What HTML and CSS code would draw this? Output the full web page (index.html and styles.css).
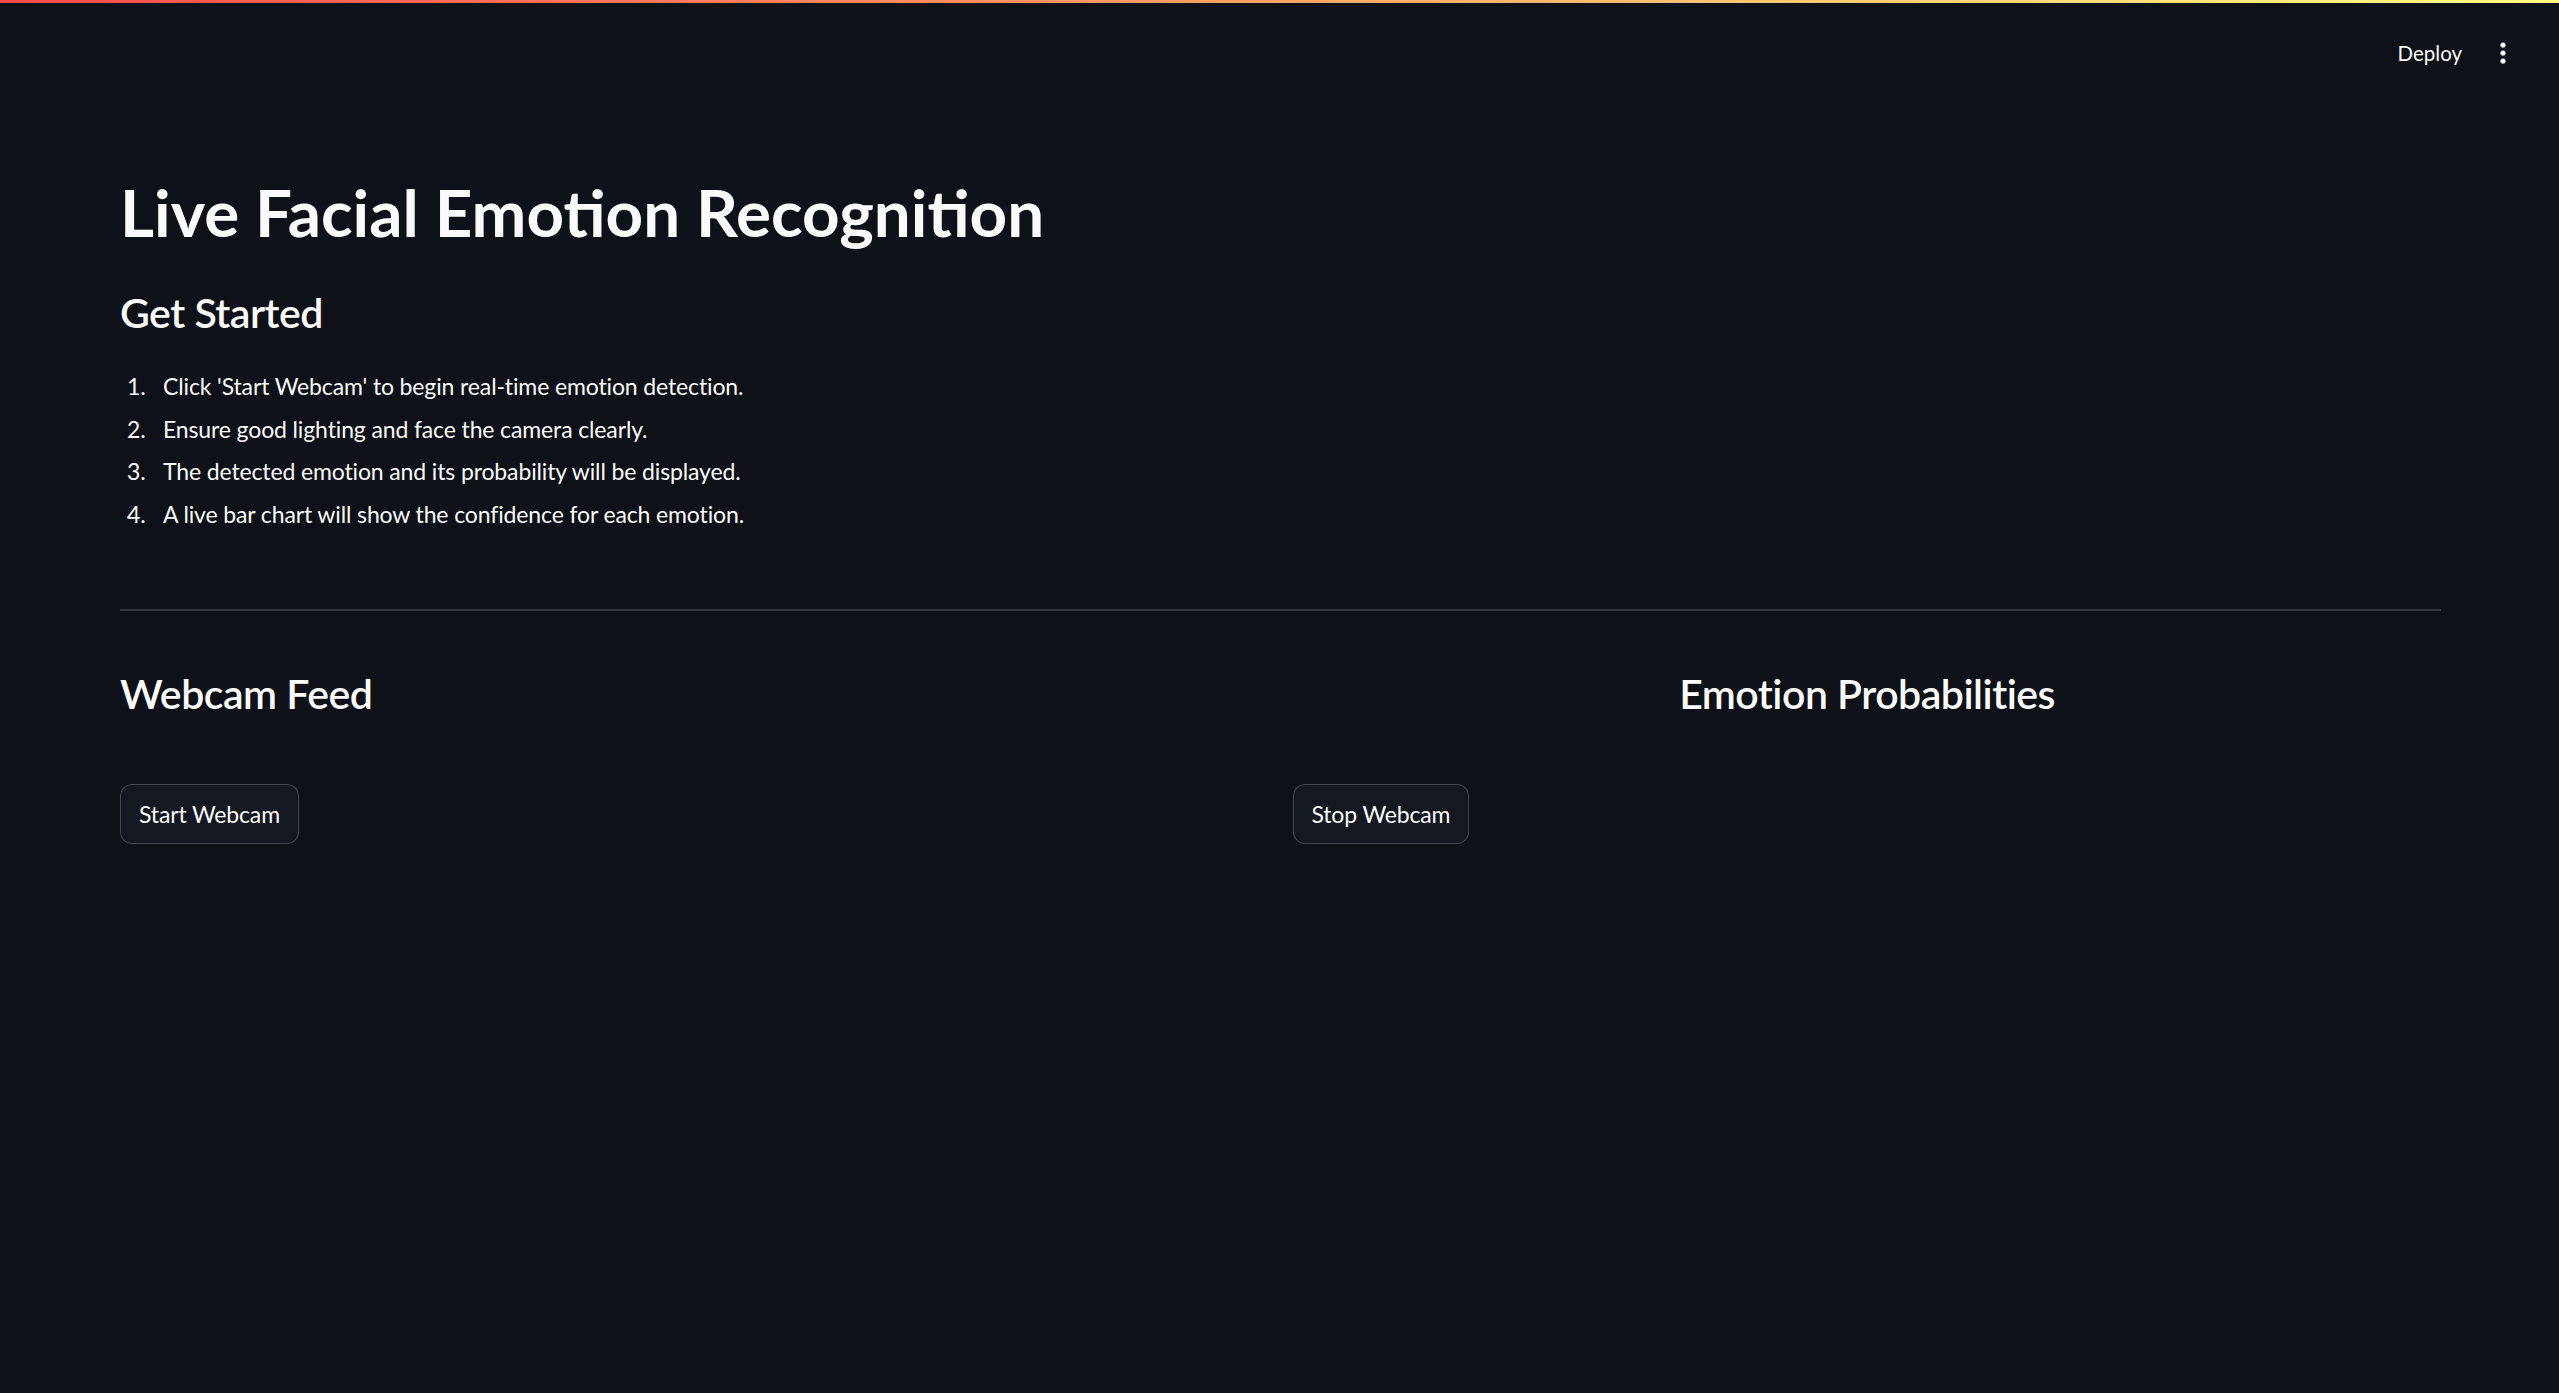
FILE: index.html
```html
<!DOCTYPE html>
<html lang="en">
<head>
<meta charset="utf-8">
<title>Live Facial Emotion Recognition</title>
<link rel="stylesheet" href="styles.css">
</head>
<body>
<div class="decoration"></div>
<header class="app-header">
  <div class="toolbar">
    <button class="deploy">Deploy</button>
    <button class="menu" aria-label="Main menu">
      <svg width="6" height="22" viewBox="0 0 6 22"><circle cx="3" cy="3" r="2.6" fill="#fafafa"/><circle cx="3" cy="11" r="2.6" fill="#fafafa"/><circle cx="3" cy="19" r="2.6" fill="#fafafa"/></svg>
    </button>
  </div>
</header>
<main class="main">
  <h1 class="title">Live Facial Emotion Recognition</h1>
  <h3 class="subheader first">Get Started</h3>
  <ol class="steps">
    <li>Click 'Start Webcam' to begin real-time emotion detection.</li>
    <li>Ensure good lighting and face the camera clearly.</li>
    <li>The detected emotion and its probability will be displayed.</li>
    <li>A live bar chart will show the confidence for each emotion.</li>
  </ol>
  <hr class="divider">
  <div class="cols cols-2-1">
    <div class="col"><h3 class="subheader">Webcam Feed</h3></div>
    <div class="col"><h3 class="subheader">Emotion Probabilities</h3></div>
  </div>
  <div class="cols cols-1-1">
    <div class="col"><button class="btn">Start Webcam</button></div>
    <div class="col"><button class="btn">Stop Webcam</button></div>
  </div>
</main>
</body>
</html>
```
FILE: styles.css
```css
html, body {
  margin: 0;
  padding: 0;
  background: #0e1117;
  color: #fafafa;
  font-family: Lato, "Open Sans", sans-serif;
}
body {
  min-height: 1393px;
}
.decoration {
  height: 3px;
  background: linear-gradient(90deg, #ff4b4b, #fffd80);
}
.app-header {
  height: 87px;
  display: flex;
  justify-content: flex-end;
}
.toolbar {
  display: flex;
  align-items: center;
  height: 100px;
  padding-right: 53px;
}
.deploy {
  background: none;
  border: none;
  color: #fafafa;
  font-family: Lato, sans-serif;
  font-size: 20.5px;
  padding: 0;
  margin: 0;
  line-height: 21px;
  cursor: pointer;
}
.menu {
  background: none;
  border: none;
  padding: 0;
  margin: 0 0 0 38px;
  width: 6px;
  height: 22px;
  display: flex;
}
.main {
  padding: 82px 118px 0 120px;
}
.title {
  margin: 0;
  font-size: 65.5px;
  line-height: 79px;
  font-weight: 700;
}
.subheader {
  margin: 0;
  font-size: 41px;
  line-height: 50px;
  font-weight: 600;
  letter-spacing: -0.5px;
}
.subheader.first {
  margin-top: 37px;
}
.steps {
  margin: 27px 0 0;
  padding-left: 7px;
  list-style: none;
  counter-reset: step;
  font-size: 23px;
  line-height: 42.7px;
  letter-spacing: -0.13px;
}
.steps li {
  counter-increment: step;
}
.steps li::before {
  content: counter(step) ".";
  display: inline-block;
  width: 36px;
}
.divider {
  margin: 73px 0 0;
  border: none;
  height: 2px;
  background: rgba(250, 250, 250, 0.17);
}
.cols {
  display: grid;
  column-gap: 24px;
}
.cols-2-1 {
  grid-template-columns: 2.015fr 1fr;
  margin-top: 58px;
}
.cols-1-1 {
  grid-template-columns: 1fr 1fr;
  margin-top: 65px;
}
.btn {
  height: 60px;
  padding: 0 18px;
  border: 1.5px solid rgba(250, 250, 250, 0.2);
  border-radius: 12px;
  background: #141820;
  color: #fafafa;
  font-family: Lato, sans-serif;
  font-size: 23px;
  letter-spacing: -0.15px;
  cursor: pointer;
}
```
